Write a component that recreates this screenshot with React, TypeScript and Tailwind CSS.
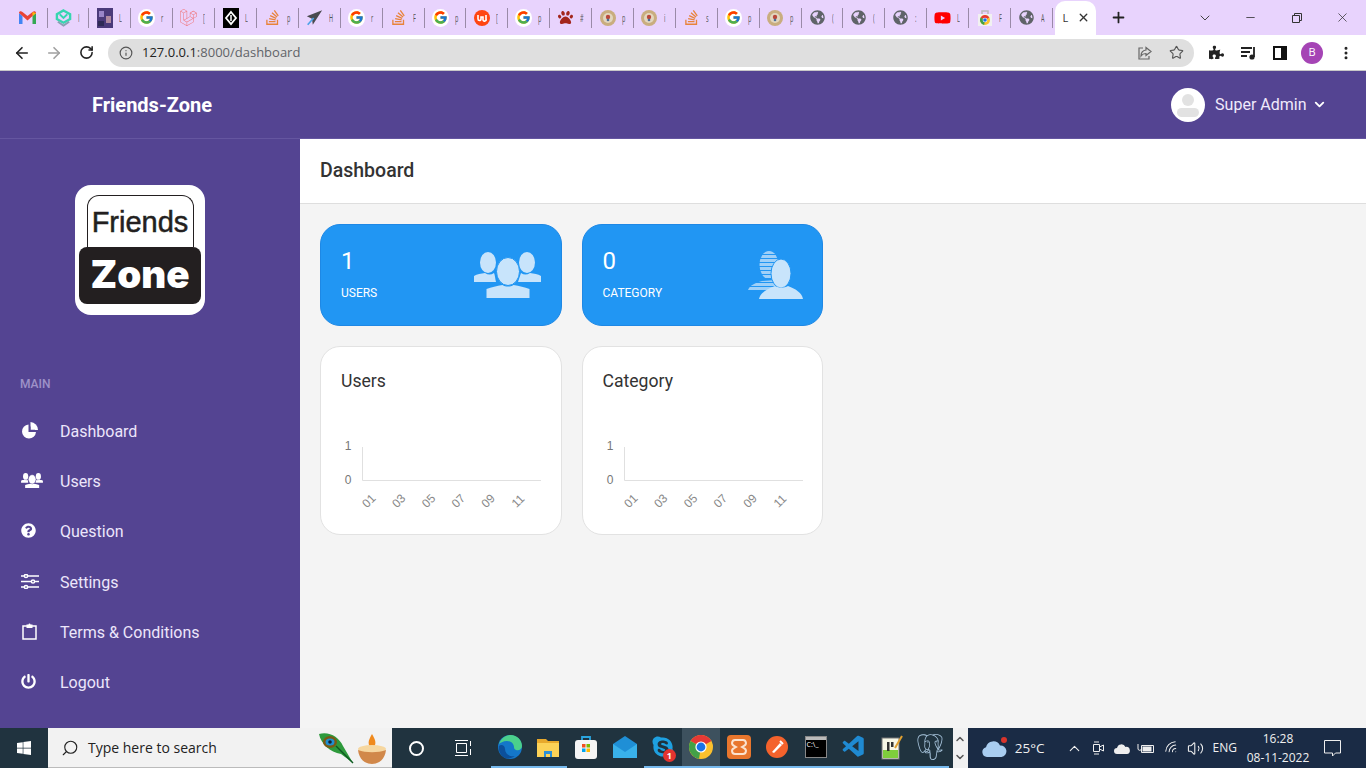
import React from "react";
import { ArrowLeft, ArrowRight, RotateCw, Info, Star, ChevronDown, ChevronUp, Minus, X, Plus, EllipsisVertical, Search, Volume2, Wifi } from "lucide-react";
import { FaQuestionCircle, FaPowerOff, FaStackOverflow, FaGlobeAmericas, FaYoutube, FaPaw, FaPuzzlePiece, FaWindows, FaSkype, FaLaravel } from "react-icons/fa";
import { FcGoogle } from "react-icons/fc";
import { VscVscode } from "react-icons/vsc";
import { SiPostgresql } from "react-icons/si";

const G = () => (
  <span className="flex h-[18px] w-[18px] items-center justify-center rounded-full bg-white">
    <FcGoogle size={15} />
  </span>
);

const SO = () => <FaStackOverflow size={17} className="text-[#e8833a]" />;
const Globe = () => <FaGlobeAmericas size={15} className="text-[#5f6368]" />;

const Compass = () => (
  <svg width="16" height="16" viewBox="0 0 16 16">
    <circle cx="8" cy="8" r="8" fill="#c9ad7f" />
    <circle cx="8" cy="8" r="5" fill="#e2d6bf" />
    <circle cx="8" cy="7" r="2.2" fill="#b9483c" />
    <circle cx="8" cy="10" r="1.3" fill="#4a6d9a" />
  </svg>
);

const Gmail = () => (
  <svg width="17" height="14" viewBox="0 0 17 14">
    <path d="M0 2v11h3.5V5z" fill="#4285f4" />
    <path d="M13.5 5v8H17V2z" fill="#34a853" />
    <path d="M0 2c0-2 2-2.5 3.5-1L8.500 5l5-4C15-.5 17 0 17 2l-3.500 3L8.500 9.500 3.500 5z" fill="#ea4335" />
    <path d="M13.500 1 17 2l-3.500 3z" fill="#fbbc04" />
  </svg>
);

const Maker = () => (
  <svg width="18" height="20" viewBox="0 0 18 20" fill="none">
    <path d="M9 2 16 6v5L9 15 2 11V6z" stroke="#36d6b0" strokeWidth="2.500" />
    <path d="M5 6l4 4 4-4" stroke="#36d6b0" strokeWidth="2" />
    <path d="M3 14l6 4 6-4" stroke="#8aa0b4" strokeWidth="2" />
  </svg>
);

const Photo = () => (
  <svg width="16" height="20" viewBox="0 0 16 20">
    <rect width="16" height="20" fill="#4b3a7a" />
    <rect x="2" y="3" width="5" height="6" fill="#9a86c8" />
    <rect x="9" y="8" width="5" height="7" fill="#b08aa0" />
    <rect x="1" y="13" width="6" height="5" fill="#2e2a55" />
  </svg>
);

const BlackBox = () => (
  <svg width="16" height="20" viewBox="0 0 16 20">
    <rect width="16" height="20" fill="#000" />
    <path d="M8 4l5 6-5 6-5-6z" fill="none" stroke="#fff" strokeWidth="1.800" />
    <path d="M8 7v6" stroke="#fff" strokeWidth="1.500" />
  </svg>
);

const Send = () => (
  <svg width="20" height="20" viewBox="0 0 20 20">
    <path d="M19 1 1 8l6 3 1 7z" fill="#4a4a50" />
    <path d="M9 10 2 18" stroke="#4da3e8" strokeWidth="2" />
  </svg>
);

const RedW = () => (
  <svg width="16" height="16" viewBox="0 0 16 16">
    <circle cx="8" cy="8" r="8" fill="#ff4612" />
    <path d="M4 5v4a1.500 1.500 0 0 0 3 0V7h2v3a1.500 1.500 0 0 0 3-1V5" fill="none" stroke="#fff" strokeWidth="1.600" />
  </svg>
);

const ChromeLogo = ({ size = 22 }: { size?: number }) => (
  <svg width={size} height={size} viewBox="0 0 24 24">
    <circle cx="12" cy="12" r="12" fill="#fbc02d" />
    <path d="M12 12 1.600 6A12 12 0 0 1 22.400 6z" fill="#e53935" />
    <path d="M12 12 1.600 6A12 12 0 0 0 10 23.800z" fill="#43a047" />
    <circle cx="12" cy="12" r="5.600" fill="#fff" />
    <circle cx="12" cy="12" r="4.400" fill="#1a73e8" />
  </svg>
);

const WebStore = () => (
  <svg width="16" height="18" viewBox="0 0 16 18">
    <path d="M1 5h14v12H1z" fill="#f1f1f1" />
    <path d="M5 5V2h6v3" fill="none" stroke="#bbb" strokeWidth="1.500" />
    <g transform="translate(3 6)">
      <ChromeLogo size={10} />
    </g>
  </svg>
);

const tabs: { icon: React.ReactNode; letter: string }[] = [
  { icon: <Gmail />, letter: "" },
  { icon: <Maker />, letter: "I" },
  { icon: <Photo />, letter: "L" },
  { icon: <G />, letter: "r" },
  { icon: <FaLaravel size={17} className="text-[#f0747a]" />, letter: "[" },
  { icon: <BlackBox />, letter: "L" },
  { icon: <SO />, letter: "p" },
  { icon: <Send />, letter: "H" },
  { icon: <G />, letter: "r" },
  { icon: <SO />, letter: "F" },
  { icon: <G />, letter: "p" },
  { icon: <RedW />, letter: "[" },
  { icon: <G />, letter: "p" },
  { icon: <FaPaw size={15} className="text-[#a3261c]" />, letter: "#" },
  { icon: <Compass />, letter: "p" },
  { icon: <Compass />, letter: "i" },
  { icon: <SO />, letter: "s" },
  { icon: <G />, letter: "p" },
  { icon: <Compass />, letter: "p" },
  { icon: <Globe />, letter: "(" },
  { icon: <Globe />, letter: "(" },
  { icon: <Globe />, letter: ":" },
  { icon: <FaYoutube size={18} className="text-[#f00]" />, letter: "L" },
  { icon: <WebStore />, letter: "F" },
  { icon: <Globe />, letter: "A" },
];

const TabStrip = () => (
  <div className="flex h-[35px] items-center bg-[#e8d3fd] pl-[12px] font-['Open_Sans',sans-serif]">
    {tabs.map((t, i) => (
      <div key={i} className={`flex h-[20px] shrink-0 items-center border-r border-[#9a8aa8] ${i === 0 ? "w-[35.500px]" : "w-[41.900px]"}`}>
        <div className="flex w-[24px] shrink-0 items-center justify-center pl-[7px]">{t.icon}</div>
        <span className="ml-[6px] origin-left scale-x-50 text-[11px] leading-none text-[#555]">{t.letter}</span>
      </div>
    ))}
    <div className="-mb-[1px] ml-[2.500px] flex h-[35px] w-[41px] items-center rounded-t-[10px] bg-white pb-[1px] pl-[7px]">
      <span className="text-[11px] leading-none text-[#333]">L</span>
      <X size={13} strokeWidth={2.500} className="ml-[9px] text-[#333]" />
    </div>
    <Plus size={17} strokeWidth={2.500} className="ml-[14px] text-[#222]" />
    <ChevronDown size={16} strokeWidth={1.500} className="ml-[70px] text-[#444]" />
    <Minus size={13} strokeWidth={1.500} className="ml-[31px] text-[#333]" />
    <svg width="12" height="12" viewBox="0 0 12 12" fill="none" stroke="#333" className="ml-[34px]">
      <path d="M1.500 3.500h7v7h-7zM3.500 3.500v-2h7v7h-2" />
    </svg>
    <X size={15} strokeWidth={1.200} className="ml-[32px] text-[#333]" />
  </div>
);

const Toolbar = () => (
  <div className="flex h-[36px] items-center border-b border-[#c8c8c8] bg-white">
    <ArrowLeft size={18} strokeWidth={2.200} className="ml-[13px] text-[#222]" />
    <ArrowRight size={18} strokeWidth={2.200} className="ml-[14px] text-[#a0a0a0]" />
    <RotateCw size={15} strokeWidth={2.500} className="ml-[16px] text-[#222]" />
    <div className="ml-[14px] flex h-[28px] w-[1086px] items-center rounded-full bg-[#dfdfdf] pl-[11px] pr-[10px]">
      <Info size={14} strokeWidth={2} className="text-[#555]" />
      <span className="ml-[9px] font-['Open_Sans',sans-serif] text-[13px] text-[#222]">
        127.0.0.1<span className="text-[#5f6368]">:8000/dashboard</span>
      </span>
      <svg width="16" height="16" viewBox="0 0 16 16" fill="none" stroke="#666" strokeWidth="1.200" className="ml-auto">
        <path d="M6 3H2v11h10v-3M9 2.500l5 4-5 4V8.500C6.500 8.500 5 9.500 4 11c0-3 2-5.500 5-6z" />
      </svg>
      <Star size={15} strokeWidth={1.800} className="ml-[16px] text-[#555]" />
    </div>
    <FaPuzzlePiece size={15} className="ml-[15px] text-[#222]" />
    <svg width="16" height="14" viewBox="0 0 16 14" fill="none" stroke="#222" strokeWidth="1.800" className="ml-[17px]">
      <path d="M0 2h11M0 6h9M0 10h6M13 1v10" />
      <circle cx="11" cy="11" r="1.700" fill="#222" />
    </svg>
    <svg width="14" height="14" viewBox="0 0 14 14" className="ml-[16px]">
      <path d="M0 0h14v14H0zM2 2v10h6V2z" fill="#111" fillRule="evenodd" />
    </svg>
    <span className="ml-[14px] flex h-[22px] w-[22px] items-center justify-center rounded-full bg-[#a544b5] font-['Open_Sans',sans-serif] text-[11px] text-white">
      B
    </span>
    <EllipsisVertical size={16} strokeWidth={2.500} className="ml-[15px] text-[#222]" />
  </div>
);

const Header = () => (
  <header className="flex h-[68px] items-center border-b border-[#6556a0] bg-[#544492] pl-[92px] pr-[39px]">
    <span className="text-[20px] font-bold text-white">Friends-Zone</span>
    <div className="ml-auto flex items-center">
      <span className="flex h-[34px] w-[34px] items-center justify-center rounded-full bg-white">
        <svg width="24" height="26" viewBox="0 0 24 26" fill="#e2e2e2">
          <circle cx="12" cy="8" r="6" />
          <rect x="1" y="16" width="22" height="9" rx="4.500" />
        </svg>
      </span>
      <span className="ml-[10.500px] text-[16px] text-[#f0eafc]">Super Admin</span>
      <ChevronDown size={15} strokeWidth={3} className="ml-[5.500px] text-white" />
    </div>
  </header>
);

const Logo = () => (
  <div className="flex h-[130px] w-[130px] flex-col items-center rounded-[16px] bg-white pt-[10px]">
    <div className="flex h-[52px] w-[107px] items-center justify-center rounded-t-[12px] border border-b-0 border-[#231f20] pt-[2px] font-['Liberation_Sans',sans-serif] text-[29px] leading-none text-[#231f20] [-webkit-text-stroke:0.5px_#231f20]">
      Friends
    </div>
    <div className="flex h-[57px] w-[122px] items-center justify-center rounded-[8px] bg-[#231f20] pb-[2px] font-['Inter',sans-serif] text-[38.500px] font-black leading-none text-white">
      Zone
    </div>
  </div>
);

const PieIcon = () => (
  <svg width="17" height="17" viewBox="0 0 17 17" fill="#fff">
    <path d="M7.500 2.500a7 7 0 1 0 7.500 7.500H7.500z" />
    <path d="M9.500 0v8H17A8 8 0 0 0 9.500 0z" />
    <path d="M9.500 4.500v3.500H14" stroke="#544492" strokeWidth="0.500" fill="none" />
  </svg>
);

const SlidersIcon = () => (
  <svg width="18" height="15" viewBox="0 0 18 15" fill="none" stroke="#fff" strokeWidth="1.500">
    <path d="M0 2h18M0 7.500h18M0 13h18" />
    <circle cx="5" cy="2" r="1.600" fill="#544492" />
    <circle cx="12" cy="7.500" r="1.600" fill="#544492" />
    <circle cx="5" cy="13" r="1.600" fill="#544492" />
  </svg>
);

const ClipIcon = () => (
  <svg width="15" height="17" viewBox="0 0 15 17" fill="none" className="ml-[1px]">
    <path d="M1 3h13v13H1z" stroke="#fff" strokeWidth="1.500" />
    <path d="M4.500 1.500h2a1 1 0 0 1 2 0h2V5h-6z" fill="#fff" />
  </svg>
);

const UsersGlyph = ({ width = 67, height = 46, fill = "#c8e4fb", edge = "#2196f3" }: { width?: number; height?: number; fill?: string; edge?: string }) => (
  <svg width={width} height={height} viewBox="0 0 67 46" fill={fill}>
    <ellipse cx="14" cy="10.500" rx="8" ry="10.500" />
    <ellipse cx="53" cy="10.500" rx="8" ry="10.500" />
    <path d="M0 30v-6c3-2 7-2.500 11-3 3 2 6 2 9 0 1 2 1 5 2 9z" />
    <path d="M67 30v-6c-3-2-7-2.500-11-3-3 2-6 2-9 0-1 3-2 6-3 9z" />
    <ellipse cx="34" cy="19.500" rx="11.500" ry="14" stroke={edge} strokeWidth="1" />
    <path d="M12.500 46v-9c5-2 10-3 16-4 3 2 8 2 11 0 6 1 11 2 16 4v9z" />
  </svg>
);

const navItems = [
  { label: "Dashboard", icon: <PieIcon /> },
  { label: "Users", icon: <UsersGlyph width={22} height={15} fill="#fff" edge="#544492" /> },
  { label: "Question", icon: <FaQuestionCircle size={15} className="text-white" /> },
  { label: "Settings", icon: <SlidersIcon /> },
  { label: "Terms & Conditions", icon: <ClipIcon /> },
  { label: "Logout", icon: <FaPowerOff size={15} className="text-white" /> },
];

const Sidebar = () => (
  <aside className="flex w-[300px] shrink-0 flex-col bg-[#544492] pt-[46px]">
    <div className="flex pl-[75px]">
      <Logo />
    </div>
    <div className="mt-[61px] pl-[20px] text-[12px] font-medium leading-[16px] text-[#9e92c8]">MAIN</div>
    <nav className="mt-[15px] flex flex-col">
      {navItems.map((n) => (
        <div key={n.label} className="flex h-[50.200px] items-center pl-[20px] text-[16px] text-[#ece6fb]">
          <span className="flex w-[40px] items-center pb-[3px] pl-[1px]">{n.icon}</span>
          {n.label}
        </div>
      ))}
    </nav>
  </aside>
);

const CategoryGlyph = () => (
  <svg width="56" height="48" viewBox="0 0 56 48">
    <defs>
      <pattern id="stripes" width="4" height="4" patternUnits="userSpaceOnUse">
        <rect width="4" height="3" fill="#9fd0f8" />
      </pattern>
    </defs>
    <ellipse cx="22" cy="14" rx="9.500" ry="14" fill="url(#stripes)" />
    <path d="M1 39c2-5 7-7 14-9l14-1v10z" fill="url(#stripes)" />
    <ellipse cx="34" cy="22.500" rx="10" ry="14.500" fill="#c8e4fb" stroke="#2196f3" />
    <path d="M12 48c1-6 8-10 16-13 4 2 9 2 13 0 8 3 14 7 15 13z" fill="#c8e4fb" />
  </svg>
);

const StatCard = ({ value, label, glyph, pad }: { value: string; label: string; glyph: React.ReactNode; pad: string }) => (
  <div className={`flex h-[102px] w-[241.500px] items-center justify-between rounded-[20px] border border-[#1e88e5] bg-[#2196f3] pl-[20px] ${pad}`}>
    <div className="pb-[2px] text-white">
      <div className="text-[24px] leading-[28px]">{value}</div>
      <div className="mt-[10px] text-[12px] leading-[16px]">{label}</div>
    </div>
    {glyph}
  </div>
);

const xLabels = ["01", "03", "05", "07", "09", "11"];

const MiniChart = () => (
  <svg width="202" height="90" viewBox="0 0 202 90" className="mt-[43px] font-['Liberation_Sans',sans-serif]">
    <path d="M21.500 12v33.500H200" fill="none" stroke="#e0e0e0" />
    <text x="7" y="15" textAnchor="middle" fontSize="12" fill="#777">1</text>
    <text x="7" y="49" textAnchor="middle" fontSize="12" fill="#777">0</text>
    {xLabels.map((l, i) => {
      const x = 28 + i * 29.800;
      return (
        <text key={l} x={x} y={70} textAnchor="middle" fontSize="12" fill="#888" transform={`rotate(-45 ${x} 66)`}>
          {l}
        </text>
      );
    })}
  </svg>
);

const ChartCard = ({ title }: { title: string }) => (
  <div className="h-[189px] w-[241.500px] rounded-[20px] border border-[#e2e2e2] bg-white px-[20px] pt-[23px]">
    <div className="text-[17.600px] leading-[22px] text-[#333]">{title}</div>
    <MiniChart />
  </div>
);

const Main = () => (
  <main className="flex min-w-0 flex-1 flex-col bg-[#f4f4f4]">
    <div className="flex h-[65px] items-center border-b border-[#dedede] bg-white pl-[20px] text-[19.500px] font-medium text-[#333]">
      Dashboard
    </div>
    <div className="flex flex-col gap-[20px] p-[20px]">
      <div className="flex gap-[20px]">
        <StatCard value="1" label="USERS" glyph={<UsersGlyph />} pad="pr-[20px]" />
        <StatCard value="0" label="CATEGORY" glyph={<CategoryGlyph />} pad="pr-[19px]" />
      </div>
      <div className="flex gap-[20px]">
        <ChartCard title="Users" />
        <ChartCard title="Category" />
      </div>
    </div>
  </main>
);

const Feather = () => (
  <svg width="38" height="33" viewBox="0 0 38 33">
    <path d="M1 2c10-3 20 3 24 12l10 17-12-9C12 20 3 12 1 2z" fill="#2e9a3c" />
    <ellipse cx="12" cy="10" rx="7" ry="6" fill="#7a5a14" />
    <ellipse cx="12" cy="10" rx="4.500" ry="3.500" fill="#1f8fd0" />
    <circle cx="12" cy="10" r="1.800" fill="#123" />
    <path d="M18 14 35 31" stroke="#0d5a20" strokeWidth="1.500" />
  </svg>
);

const Diya = () => (
  <svg width="32" height="32" viewBox="0 0 32 32">
    <path d="M16 1c3 5 4 8 3 11-1 2-5 2-6 0-1-3 0-6 3-11z" fill="#f08a1d" />
    <ellipse cx="16" cy="16" rx="14" ry="4" fill="#f6d7a0" />
    <path d="M2 17c1 9 7 14 14 14s13-5 14-14c-8 3-20 3-28 0z" fill="#d1884a" />
  </svg>
);

const Edge = () => (
  <svg width="24" height="24" viewBox="0 0 24 24">
    <circle cx="12" cy="12" r="12" fill="#1477c9" />
    <path d="M1 9C3 3 8 0 13 0c6 0 11 5 11 11 0 3-3 5-6 4-2-1-2-2-2-3 0-3-3-6-7-6-4 0-7 2-8 3z" fill="#4bd08c" />
    <path d="M7 14c0 5 5 8 10 7-3 2-7 3-10 2C3 21 0 16 1 11c2-2 6-1 6 3z" fill="#0c4f9a" />
  </svg>
);

const Folder = () => (
  <svg width="22" height="20" viewBox="0 0 22 20">
    <path d="M0 2h9l2 2h11v4H0z" fill="#e8a92c" />
    <rect y="6" width="22" height="14" fill="#fcd257" />
    <path d="M7 14h8v6H7z" fill="#2d8fd6" />
    <rect x="9" y="17" width="4" height="3" fill="#fcd257" />
  </svg>
);

const Store = () => (
  <svg width="22" height="24" viewBox="0 0 22 24">
    <path d="M7 5V2h8v3" fill="none" stroke="#2aa6e0" strokeWidth="1.800" />
    <rect y="5" width="22" height="19" rx="3" fill="#f5f5f5" />
    <rect x="7" y="9" width="3.500" height="3.500" fill="#f25022" />
    <rect x="11.500" y="9" width="3.500" height="3.500" fill="#7fba00" />
    <rect x="7" y="13.500" width="3.500" height="3.500" fill="#00a4ef" />
    <rect x="11.500" y="13.500" width="3.500" height="3.500" fill="#ffb900" />
  </svg>
);

const Mail = () => (
  <svg width="24" height="24" viewBox="0 0 24 24">
    <path d="M0 9 12 1l12 8v14H0z" fill="#1f8fd6" />
    <path d="M0 9l12 8 12-8v14H0z" fill="#39b1ea" />
  </svg>
);

const Xampp = () => (
  <svg width="24" height="24" viewBox="0 0 24 24">
    <rect width="24" height="24" rx="4" fill="#e8762d" />
    <path d="M8 5h8a3 3 0 0 1 1 5.800l-2 1.200 2 1.200A3 3 0 0 1 16 19H8a3 3 0 0 1-1-5.800L9 12l-2-1.200A3 3 0 0 1 8 5z" fill="none" stroke="#fbe3cf" strokeWidth="2" />
  </svg>
);

const Postman = () => (
  <svg width="22" height="22" viewBox="0 0 22 22">
    <circle cx="11" cy="11" r="11" fill="#f4622c" />
    <path d="M6 16l8-9 2 2-8 8z" fill="#fff" />
    <path d="M14 5l3 3" stroke="#fff" strokeWidth="2" />
  </svg>
);

const Cmd = () => (
  <span className="flex h-[22px] w-[22px] flex-col border border-[#888] bg-black">
    <span className="h-[3px] bg-[#bbb]" />
    <span className="pl-[1px] text-[7px] leading-[9px] text-white">C:\_</span>
  </span>
);

const Notepad = () => (
  <svg width="22" height="26" viewBox="0 0 22 26">
    <rect x="1" y="4" width="17" height="21" fill="#f7f7e6" stroke="#777" />
    <rect x="2" y="16" width="15" height="8" fill="#7fce3c" />
    <rect x="6" y="8" width="2.500" height="9" fill="#333" />
    <rect x="10" y="8" width="2.500" height="5" fill="#333" />
    <path d="M14 14 21 2" stroke="#e0a030" strokeWidth="2" />
  </svg>
);

const apps: { key: string; node: React.ReactNode; run?: boolean; active?: boolean }[] = [
  { key: "edge", node: <Edge />, run: true },
  { key: "folder", node: <Folder />, run: true },
  { key: "store", node: <Store /> },
  { key: "mail", node: <Mail /> },
  { key: "skype", node: <FaSkype size={24} className="text-[#1ea0e0]" />, run: true },
  { key: "chrome", node: <ChromeLogo size={24} />, run: true, active: true },
  { key: "xampp", node: <Xampp />, run: true },
  { key: "postman", node: <Postman />, run: true },
  { key: "cmd", node: <Cmd />, run: true },
  { key: "vscode", node: <VscVscode size={26} className="text-[#1f8ad2]" />, run: true },
  { key: "notepad", node: <Notepad />, run: true },
  { key: "pg", node: <SiPostgresql size={26} className="text-[#a9c6de]" />, run: true },
];

const Taskbar = () => (
  <div className="flex h-[40px] shrink-0 items-center bg-[#20333f] font-['Open_Sans',sans-serif] text-white">
    <div className="flex w-[48px] justify-center">
      <FaWindows size={16} />
    </div>
    <div className="flex h-[40px] w-[344px] items-center overflow-hidden border-b border-[#bbb] bg-[#f2f2f2] pl-[13px] text-[#222]">
      <Search size={18} strokeWidth={1.500} className="-scale-x-100" />
      <span className="ml-[9px] text-[14px]">Type here to search</span>
      <div className="ml-auto flex items-end pr-[4px] pt-[2px]">
        <Feather />
        <Diya />
      </div>
    </div>
    <div className="flex w-[48px] justify-center">
      <span className="h-[15px] w-[15px] rounded-full border-2 border-white" />
    </div>
    <div className="flex w-[47px] justify-center">
      <svg width="17" height="16" viewBox="0 0 17 16" fill="none" stroke="#fff">
        <path d="M0 .5h13M0 15.500h13M1.500 3.500h10v9h-10zM15.500 1v5M15.500 9v6" />
      </svg>
    </div>
    <div className="ml-[4px] flex">
      {apps.map((a) => (
        <div
          key={a.key}
          className={`relative flex h-[40px] w-[38.200px] items-center justify-center border-b-2 ${a.run ? "border-[#76b9ed]" : "border-transparent"} ${a.active ? "bg-[#3d515e]" : ""}`}
        >
          {a.node}
          {a.key === "skype" && (
            <span className="absolute bottom-[4px] right-[6px] flex h-[13px] w-[13px] items-center justify-center rounded-full bg-[#e3342f] text-[9px] font-bold leading-none">
              1
            </span>
          )}
        </div>
      ))}
    </div>
    <div className="ml-[3.600px] flex h-[40px] w-[15px] flex-col items-center justify-center gap-[6px] bg-[#f1f1f1] text-[#555]">
      <ChevronUp size={12} strokeWidth={3} />
      <ChevronDown size={12} strokeWidth={3} />
    </div>
    <div className="flex h-[40px] flex-1 items-center bg-[#1a2b45] text-[#f0f0f0]">
      <div className="relative ml-[14px] flex">
        <svg width="25" height="17" viewBox="0 0 25 17">
          <path d="M5 17a5 5 0 0 1-1-9.800A7.500 7.500 0 0 1 18 5.500 5.800 5.800 0 0 1 19.500 17z" fill="#a9cdf0" />
        </svg>
        <span className="absolute -top-[3px] right-[0px] h-[6px] w-[6px] rounded-full bg-[#d9342b]" />
      </div>
      <span className="ml-[8px] text-[13.500px]">25°C</span>
      <ChevronUp size={17} strokeWidth={1.500} className="ml-[21px]" />
      <svg width="11" height="18" viewBox="0 0 11 18" fill="none" stroke="#eee" className="ml-[10px]">
        <path d="M1 3h5M1 15h5M.5 5.500h6v7h-6zM6.500 8 10.500 6v6l-4-2" />
      </svg>
      <svg width="16" height="11" viewBox="0 0 16 11" fill="#eee" className="ml-[10px]">
        <path d="M3 11a3 3 0 0 1 0-6 4.500 4.500 0 0 1 8.500-1A3.500 3.500 0 0 1 13 11z" />
      </svg>
      <svg width="17" height="13" viewBox="0 0 17 13" fill="none" stroke="#eee" className="ml-[7px]">
        <path d="M4.500 3.500h12v7h-12zM1 2v4a1.500 1.500 0 0 0 3.500 1" />
        <rect x="6" y="5" width="8" height="4" fill="#eee" />
      </svg>
      <Wifi size={16} strokeWidth={1.500} className="ml-[10px] -rotate-45" />
      <Volume2 size={17} strokeWidth={1.500} className="ml-[7px]" />
      <span className="ml-[9px] text-[12px]">ENG</span>
      <div className="ml-[8px] w-[66px] text-center text-[12px] leading-[19px]">
        <div>16:28</div>
        <div>08-11-2022</div>
      </div>
      <svg width="17" height="17" viewBox="0 0 17 17" fill="none" stroke="#eee" className="ml-[13px]">
        <path d="M.5 .5h16v12.500h-5l-3 3v-3H.5z" />
      </svg>
    </div>
  </div>
);

export default function App() {
  return (
    <div className="flex h-screen w-full flex-col overflow-hidden font-['Roboto',sans-serif]">
      <TabStrip />
      <Toolbar />
      <Header />
      <div className="flex min-h-0 flex-1">
        <Sidebar />
        <Main />
      </div>
      <Taskbar />
    </div>
  );
}
